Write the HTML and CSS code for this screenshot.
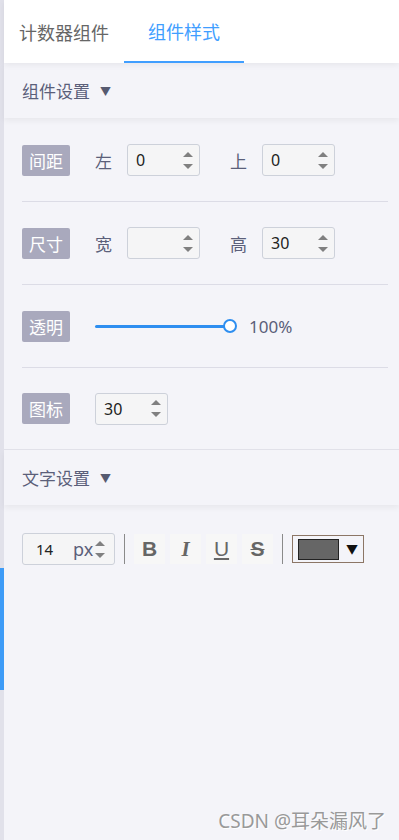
FILE: index.html
```html
<!DOCTYPE html>
<html lang="zh-CN">
  <head>
    <meta charset="UTF-8" />
    <meta name="viewport" content="width=device-width, initial-scale=1.0" />
    <title>组件样式</title>
    <link rel="stylesheet" href="styles.css">
  </head>
  <body>
    <div class="panel">
      <div class="side__mark"></div>

      <div class="tabs">
        <div class="tab">计数器组件</div>
        <div class="tab tab--active">组件样式</div>
      </div>

      <div class="section__head">组件设置 <span class="caret">&#9660;</span></div>

      <div class="settings">
        <div class="row">
          <span class="badge">间距</span>
          <span class="field__label">左</span>
          <div class="num">
            <span class="num__value">0</span>
            <span class="spin"><i class="spin__up"></i><i class="spin__down"></i></span>
          </div>
          <span class="field__label field__label--far">上</span>
          <div class="num">
            <span class="num__value">0</span>
            <span class="spin"><i class="spin__up"></i><i class="spin__down"></i></span>
          </div>
        </div>

        <div class="row">
          <span class="badge">尺寸</span>
          <span class="field__label">宽</span>
          <div class="num">
            <span class="num__value"></span>
            <span class="spin"><i class="spin__up"></i><i class="spin__down"></i></span>
          </div>
          <span class="field__label field__label--far">高</span>
          <div class="num">
            <span class="num__value">30</span>
            <span class="spin"><i class="spin__up"></i><i class="spin__down"></i></span>
          </div>
        </div>

        <div class="row">
          <span class="badge">透明</span>
          <div class="slider">
            <div class="slider__track"></div>
            <div class="slider__thumb"></div>
          </div>
          <span class="percent">100%</span>
        </div>

        <div class="row row--last">
          <span class="badge">图标</span>
          <div class="num">
            <span class="num__value">30</span>
            <span class="spin"><i class="spin__up"></i><i class="spin__down"></i></span>
          </div>
        </div>
      </div>

      <div class="section__head">文字设置 <span class="caret">&#9660;</span></div>

      <div class="toolbar">
        <div class="size">
          <span class="size__value">14</span>
          <span class="size__unit">px</span>
          <span class="spin"><i class="spin__up"></i><i class="spin__down"></i></span>
        </div>
        <span class="vline"></span>
        <span class="tool tool--bold">B</span>
        <span class="tool tool--italic">I</span>
        <span class="tool tool--under">U</span>
        <span class="tool tool--strike">S</span>
        <span class="vline"></span>
        <div class="color">
          <span class="color__swatch"></span>
          <span class="color__caret">&#9660;</span>
        </div>
      </div>

      <div class="watermark">CSDN @耳朵漏风了</div>
    </div>
  </body>
</html>
```

FILE: styles.css
```css
* {
  padding: 0;
  margin: 0;
  box-sizing: border-box;
}

body {
  font-family: "Noto Sans", "Noto Sans CJK SC", sans-serif;
  background: #f4f4f9;
  overflow: hidden;
}

.panel {
  position: relative;
  min-height: 840px;
  border-left: 4px solid #e1e1ea;
  background: #f4f4f9;
}

.side__mark {
  position: absolute;
  left: -4px;
  top: 568px;
  width: 4px;
  height: 122px;
  background: #3d9bf7;
}

/* tabs */
.tabs {
  position: relative;
  z-index: 2;
  display: flex;
  height: 63px;
  background: #fff;
  box-shadow: 0 2px 6px rgba(0, 0, 0, 0.06);
}

.tab {
  width: 120px;
  display: flex;
  justify-content: center;
  align-items: center;
  font-size: 18px;
  color: #666;
}

.tab--active {
  color: #409eff;
  border-bottom: 2px solid #409eff;
}

/* section headers */
.section__head {
  position: relative;
  z-index: 1;
  height: 55px;
  display: flex;
  align-items: center;
  gap: 10px;
  padding-left: 18px;
  font-size: 17px;
  color: #5b5f7a;
  background: #f4f4f9;
  box-shadow: 0 3px 6px rgba(0, 0, 0, 0.05);
}

.caret {
  font-size: 11px;
  color: #565a70;
}

/* settings rows */
.settings {
  padding-top: 1px;
}

.row {
  display: flex;
  align-items: center;
  height: 83px;
  margin: 0 11px 0 18px;
  border-bottom: 1px solid #dcdce6;
}

.row--last {
  margin: 0;
  padding-left: 18px;
  height: 82px;
  border-bottom-color: #e2e2ea;
}

.badge {
  width: 48px;
  height: 31px;
  display: flex;
  justify-content: center;
  align-items: center;
  border-radius: 2px;
  background: #a9a9bd;
  color: #fff;
  font-size: 17px;
  margin-right: 25px;
}

.field__label {
  font-size: 17px;
  color: #5b5f7a;
  margin-right: 15px;
}

.field__label--far {
  margin-left: 30px;
}

.num {
  width: 73px;
  height: 32px;
  display: flex;
  align-items: center;
  justify-content: space-between;
  padding: 0 6px 0 8px;
  border: 1px solid #cdd1da;
  border-radius: 3px;
  background: #f5f5f6;
  font-size: 16px;
  color: #222;
}

.spin {
  display: flex;
  flex-direction: column;
  gap: 7px;
}

.spin__up,
.spin__down {
  width: 0;
  height: 0;
  border-left: 5px solid transparent;
  border-right: 5px solid transparent;
}

.spin__up {
  border-bottom: 5px solid #808080;
}

.spin__down {
  border-top: 5px solid #808080;
}

/* slider */
.slider {
  position: relative;
  width: 142px;
  height: 14px;
  margin-left: 0;
  display: flex;
  align-items: center;
}

.slider__track {
  width: 131px;
  height: 3px;
  border-radius: 2px;
  background: #2e8ef0;
}

.slider__thumb {
  width: 14px;
  height: 14px;
  margin-left: -3px;
  border: 2px solid #2e8ef0;
  border-radius: 50%;
  background: #fff;
}

.percent {
  margin-left: 12px;
  font-size: 17px;
  color: #5b5f7a;
}

/* text toolbar */
.toolbar {
  display: flex;
  align-items: center;
  gap: 5px;
  padding: 28px 0 0 18px;
}

.size {
  width: 93px;
  height: 32px;
  display: flex;
  align-items: center;
  padding: 0 5px 0 13px;
  border: 1px solid #cdd1da;
  border-radius: 3px;
  background: #f5f5f6;
}

.size__value {
  width: 37px;
  font-size: 15px;
  color: #222;
}

.size__unit {
  font-size: 18px;
  color: #5b5f7a;
  margin-right: 2px;
}

.vline {
  width: 1px;
  height: 30px;
  background: #8a8a8a;
  margin: 0 4px;
}

.tool {
  width: 31px;
  height: 30px;
  display: flex;
  justify-content: center;
  align-items: center;
  background: #f7f7f7;
  color: #666;
  font-size: 21px;
  font-family: "Liberation Sans", sans-serif;
}

.tool--bold {
  font-weight: 700;
}

.tool--italic {
  font-style: italic;
  font-family: "Liberation Serif", serif;
  font-weight: 700;
}

.tool--under {
  text-decoration: underline;
  text-underline-offset: 2px;
}

.tool--strike {
  font-weight: 700;
  text-decoration: line-through;
  text-decoration-thickness: 1px;
}

.color {
  width: 72px;
  height: 28px;
  display: flex;
  align-items: center;
  gap: 7px;
  padding-left: 5px;
  border: 1px solid #8c7666;
}

.color__swatch {
  width: 41px;
  height: 21px;
  background: #666;
  border: 1px solid #222;
}

.color__caret {
  font-size: 12px;
  color: #111;
}

.watermark {
  position: absolute;
  right: 13px;
  bottom: 6px;
  font-size: 19px;
  color: #999;
  text-shadow: 1px 1px 0 #fff;
}
```
